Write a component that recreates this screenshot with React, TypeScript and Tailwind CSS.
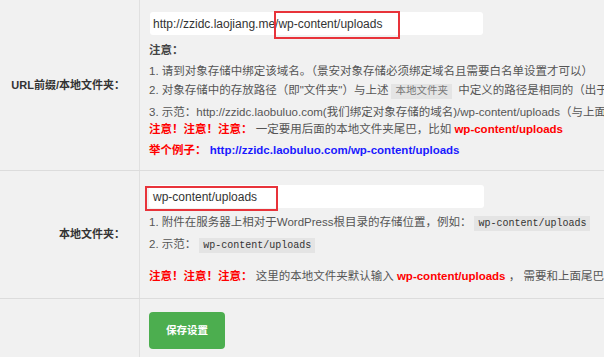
import React from 'react';

const font = { fontFamily: '"Liberation Sans", "Noto Sans CJK SC", sans-serif' };

const Code: React.FC<{ children: React.ReactNode }> = ({ children }) => (
  <code className="bg-[#e4e4e4] px-[4px] py-[2px] mx-[3px] text-[10px] text-[#333] font-['Liberation_Mono','Noto_Sans_CJK_SC',monospace]">
    {children}
  </code>
);

const Warn: React.FC = () => (
  <span className="font-bold text-[#ff0000]">注意！注意！注意：</span>
);

export default function App() {
  return (
    <div
      style={font}
      className="w-[604px] h-[357px] overflow-hidden bg-[#f1f1f1] text-[11.5px] text-[#555] whitespace-nowrap"
    >
      {/* URL prefix row */}
      <div className="flex border-b border-[#dcdcdc]">
        <div className="w-[140px] shrink-0 border-r border-[#e0e0e0] flex items-center justify-end pr-[14px] text-[11px] font-bold text-[#333]">
          URL前缀/本地文件夹：
        </div>
        <div className="relative flex-1 pl-[9px] pt-[12px] pb-[11px]">
          <div className="ml-[1px] w-[333px] h-[23px] bg-white rounded-[3px] pl-[3px] flex items-center text-[12px] text-[#333]">
            http://zzidc.laojiang.me/wp-content/uploads
          </div>
          <div className="absolute left-[134px] top-[11px] w-[126px] h-[28px] border-2 border-[#e8333a]" />
          <div className="mt-[5px] h-[20px] leading-[20px] font-bold text-[#444]">注意：</div>
          <div className="mt-[1px] h-[20px] leading-[20px]">
            1. 请到对象存储中绑定该域名。（景安对象存储必须绑定域名且需要白名单设置才可以）
          </div>
          <div className="h-[18px] leading-[18px]">
            2. 对象存储中的存放路径（即"文件夹"）与上述
            <Code><span className="text-[#777] font-['Noto_Sans_CJK_SC',sans-serif] text-[10.5px]">本地文件夹</span></Code>
            {' '}中定义的路径是相同的（出于方便管理考虑）
          </div>
          <div className="mt-[4px] h-[18px] leading-[18px]">
            3. 示范：http://zzidc.laobuluo.com(我们绑定对象存储的域名)/wp-content/uploads（与上面本地文件夹一致）
          </div>
          <div className="h-[16px] leading-[16px]">
            <Warn /> 一定要用后面的本地文件夹尾巴，比如{' '}
            <span className="font-bold text-[#ff0000]">wp-content/uploads</span>
          </div>
          <div className="mt-[4px] h-[18px] leading-[18px] font-bold">
            <span className="text-[#ff0000]">举个例子：</span>{' '}
            <span className="text-[#1a1aff]">http://zzidc.laobuluo.com/wp-content/uploads</span>
          </div>
        </div>
      </div>

      {/* Local folder row */}
      <div className="flex border-b border-[#dcdcdc]">
        <div className="w-[140px] shrink-0 border-r border-[#e0e0e0] flex items-center justify-end pr-[14px] text-[11px] font-bold text-[#333]">
          本地文件夹：
        </div>
        <div className="relative flex-1 pl-[9px] pt-[14px] pb-[13px]">
          <div className="w-[335px] h-[23px] bg-white rounded-[3px] pl-[4px] flex items-center text-[12px] text-[#333]">
            wp-content/uploads
          </div>
          <div className="absolute left-[5px] top-[15px] w-[133px] h-[25px] border-2 border-[#e8333a]" />
          <div className="mt-[5px] h-[18px] leading-[18px]">
            1. 附件在服务器上相对于WordPress根目录的存储位置，例如：
            <Code>wp-content/uploads</Code> （注意不要以斜杠开头）
          </div>
          <div className="mt-[2px] h-[22px] leading-[22px]">
            2. 示范：<Code>wp-content/uploads</Code>
          </div>
          <div className="mt-[12px] h-[18px] leading-[18px]">
            <Warn /> 这里的本地文件夹默认输入{' '}
            <span className="font-bold text-[#ff0000]">wp-content/uploads</span> ， 需要和上面尾巴一致
          </div>
        </div>
      </div>

      {/* Save row */}
      <div className="flex h-[60px]">
        <div className="w-[140px] shrink-0 border-r border-[#e0e0e0]" />
        <div className="flex-1 pl-[9px] pt-[13px]">
          <button className="w-[76px] h-[37px] rounded-[4px] bg-[#4cae4f] text-white text-[10.5px] font-bold">
            保存设置
          </button>
        </div>
      </div>
    </div>
  );
}
